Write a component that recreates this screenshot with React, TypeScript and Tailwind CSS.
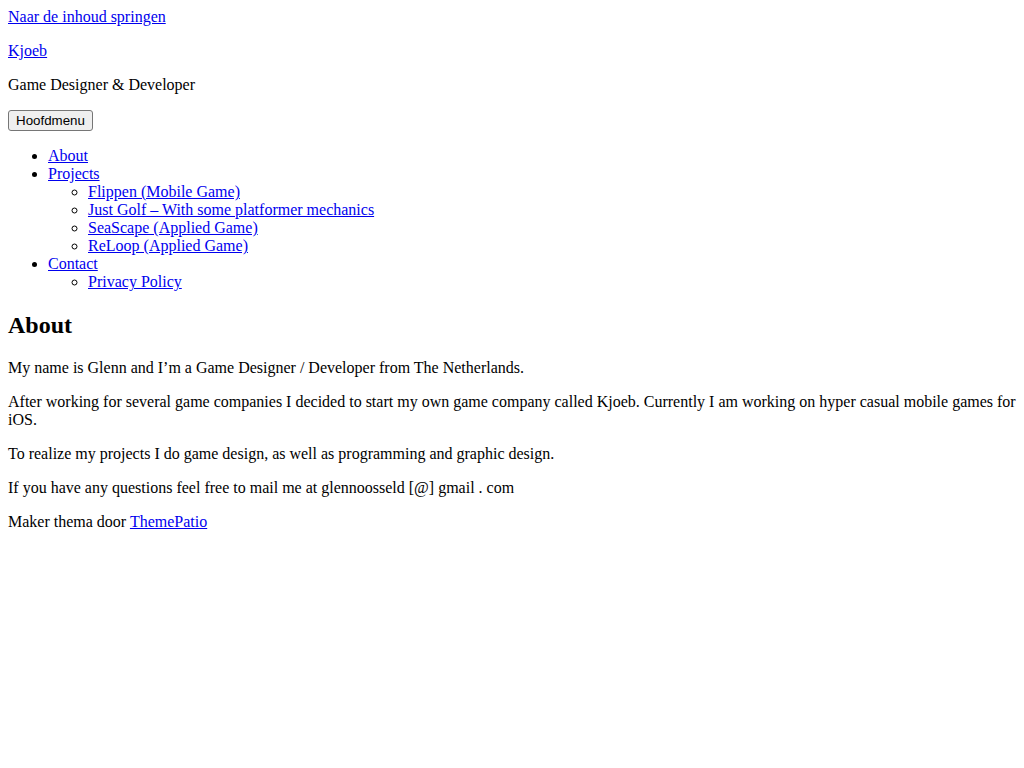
const link = "text-[#0000ee] underline";

export default function App() {
  return (
    <div className="m-2 bg-white text-black text-base leading-[normal] font-['Liberation_Serif','Times_New_Roman',serif]">
      <a href="#content" className={link}>
        Naar de inhoud springen
      </a>

      <header>
        <p className="my-4">
          <a href="#" className={link}>
            Kjoeb
          </a>
        </p>
        <p className="my-4">Game Designer &amp; Developer</p>

        <nav>
          <button className="h-[21px] px-[7px] text-[13.33px] font-['Liberation_Sans',Arial,sans-serif] bg-[#efefef] border border-[#767676] rounded-[3px]">
            Hoofdmenu
          </button>
          <ul className="my-4 pl-10 list-disc">
            <li>
              <a href="#" className={link}>About</a>
            </li>
            <li>
              <a href="#" className={link}>Projects</a>
              <ul className="pl-10 list-[circle]">
                <li><a href="#" className={link}>Flippen (Mobile Game)</a></li>
                <li><a href="#" className={link}>Just Golf – With some platformer mechanics</a></li>
                <li><a href="#" className={link}>SeaScape (Applied Game)</a></li>
                <li><a href="#" className={link}>ReLoop (Applied Game)</a></li>
              </ul>
            </li>
            <li>
              <a href="#" className={link}>Contact</a>
              <ul className="pl-10 list-[circle]">
                <li><a href="#" className={link}>Privacy Policy</a></li>
              </ul>
            </li>
          </ul>
        </nav>
      </header>

      <main id="content">
        <h2 className="mt-[21px] mb-[19.92px] text-2xl font-bold leading-[normal]">About</h2>
        <p className="my-4">My name is Glenn and I’m a Game Designer / Developer from The Netherlands.</p>
        <p className="my-4">
          After working for several game companies I decided to start my own game company called Kjoeb. Currently I am working on hyper casual mobile games for iOS.
        </p>
        <p className="my-4">To realize my projects I do game design, as well as programming and graphic design.</p>
        <p className="my-4">If you have any questions feel free to mail me at glennoosseld [@] gmail . com</p>
      </main>

      <footer>
        <p className="my-4">
          Maker thema door{" "}
          <a href="#" className={link}>ThemePatio</a>
        </p>
      </footer>
    </div>
  );
}
